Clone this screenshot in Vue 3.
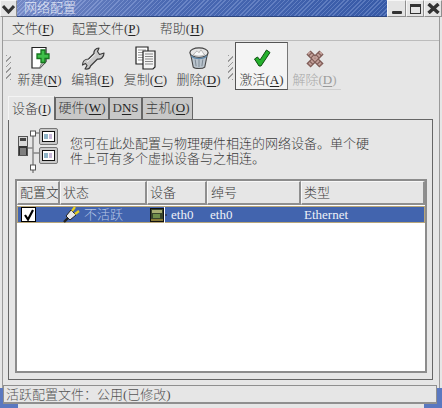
<script setup>
const menus = [
  { label: '文件', key: 'F', cls: 'm-a' },
  { label: '配置文件', key: 'P', cls: 'm-b' },
  { label: '帮助', key: 'H', cls: 'm-c' },
]
const tabs = [
  { label: '设备', key: 'I', cls: 'tab-a' },
  { label: '硬件', key: 'W', cls: 'tab-b' },
  { label: 'D', key: 'N', tail: 'S', plain: true, cls: 'tab-c' },
  { label: '主机', key: 'O', cls: 'tab-d' },
]
</script>

<template>
  <div class="win">
    <header class="title">
      <div class="tbtn menu-btn">
        <svg width="13" height="10" viewBox="0 0 13 10"><path d="M1 2 6.500 8 12 2" fill="none" stroke="#333" stroke-width="3"/></svg>
      </div>
      <div class="title-bar"><span class="title-text">网络配置</span></div>
      <div class="tbtn b-min"><span class="min-glyph"></span></div>
      <div class="tbtn b-max"><span class="max-glyph"></span></div>
      <div class="tbtn b-close">
        <svg width="13" height="11" viewBox="0 0 13 11"><path d="M1.500 1 11.500 10M11.500 1 1.500 10" stroke="#333" stroke-width="3.400"/></svg>
      </div>
    </header>

    <div class="body">
      <nav class="menubar">
        <span v-for="m in menus" :key="m.key" class="menu-item" :class="m.cls">{{ m.label }}(<u>{{ m.key }}</u>)</span>
      </nav>

      <div class="toolbar">
        <div class="grip"></div>
        <div class="tool">
          <svg class="ic" width="26" height="24" viewBox="0 0 26 24">
            <path d="M5 1.500h14v14l-6 6.500H5z" fill="#fff" stroke="#222" stroke-width="1.200"/>
            <path d="M13 22c0-3 2-6 6-6.500" fill="#bbb" stroke="#777"/>
            <path d="M14 4h4v4h4v4.500h-4v4h-4v-4h-4V8h4z" fill="#3fc04a" stroke="#17751f" stroke-width="1.300"/>
          </svg>
          <span>新建(<u>N</u>)</span>
        </div>
        <div class="tool">
          <svg class="ic" width="26" height="24" viewBox="0 0 26 24">
            <path d="M19 2 17.500 5.500 19.500 8.500 24 7C24 11 21 13.500 17.500 13L10.500 20C10 22 8 23.500 5 23L7 19.500 5.500 17.500 2.500 19C2.500 15.500 5 13 8.500 13L14 7.500C13.500 5 15.500 2 19 2Z" fill="#c9c9c9" stroke="#3c3c3c" stroke-width="1.200" stroke-linejoin="round"/>
            <path d="M7 16 15.500 8" stroke="#f2f2f2"/>
          </svg>
          <span>编辑(<u>E</u>)</span>
        </div>
        <div class="tool">
          <svg class="ic" width="26" height="24" viewBox="0 0 26 24">
            <path d="M3 1h12v17H3z" fill="#fff" stroke="#222" stroke-width="1.200"/>
            <path d="M5 4h8M5 6.500h8M5 9h8M5 11.500h8M5 14h8" stroke="#999"/>
            <path d="M10 5h12v16l-2 2H10z" fill="#f4f4f4" stroke="#222" stroke-width="1.200"/>
            <path d="M12 8h8M12 10.500h8M12 13h8M12 15.500h8M12 18h8" stroke="#888"/>
          </svg>
          <span>复制(<u>C</u>)</span>
        </div>
        <div class="tool">
          <svg class="ic" width="26" height="25" viewBox="0 0 26 25">
            <path d="M4 7 7 22c2 2 10 2 12 0L22 7z" fill="#b9c3cc" stroke="#444" stroke-width="1.100"/>
            <path d="M9 14 10 21M17 14l-1 7M13 14v8" stroke="#7b8792"/>
            <ellipse cx="13" cy="7" rx="9.500" ry="5" fill="#e6e6e6" stroke="#444" stroke-width="1.200"/>
            <path d="M7 9c3 2 9 2 12 0-2-1-2-3-4-5l-2 3-2-2z" fill="#f8f8f8" stroke="#888" stroke-width=".6"/>
            <path d="M5 10c3 4 13 4 16 0" fill="none" stroke="#5f87a8" stroke-width="1.600"/>
          </svg>
          <span>删除(<u>D</u>)</span>
        </div>
        <div class="grip grip-2"></div>
        <div class="tool tool-active">
          <svg class="ic" width="26" height="24" viewBox="0 0 26 24">
            <path d="M5.500 13 8.500 11 11 14 17.500 4 21 6.500 12 20H10z" fill="#25b02c" stroke="#0c4d10" stroke-width="1"/>
          </svg>
          <span>激活(<u>A</u>)</span>
        </div>
        <div class="tool tool-off">
          <svg class="ic" width="26" height="24" viewBox="0 0 26 24">
            <path d="M6.500 6.500 19.500 19.500M19.500 6.500 6.500 19.500" stroke="#7d5a55" stroke-width="6"/>
            <path d="M6.500 6.500 19.500 19.500M19.500 6.500 6.500 19.500" stroke="#c3a09a" stroke-width="3.400" stroke-dasharray="2 1"/>
          </svg>
          <span>解除(<u>D</u>)</span>
        </div>
      </div>

      <div class="notebook">
        <div class="tabs">
          <div v-for="(t, i) in tabs" :key="t.key" class="tab" :class="[t.cls, { active: i === 0 }]">
            <template v-if="t.plain">{{ t.label }}<u>{{ t.key }}</u>{{ t.tail }}</template>
            <template v-else>{{ t.label }}(<u>{{ t.key }}</u>)</template>
          </div>
        </div>
        <section class="panel">
          <div class="info">
            <svg class="net" width="42" height="52" viewBox="0 0 42 52">
              <path d="M16 6v34v6M16 6h7M10 21h6M16 26h7M16 40h0" stroke="#888" stroke-width="1.500" fill="none"/>
              <rect x="13.500" y="4" width="5" height="5" fill="#fff" stroke="#555"/>
              <rect x="13.500" y="38" width="5" height="5" fill="#fff" stroke="#555"/>
              <rect x="1.500" y="9.500" width="9" height="19" fill="#d8d8d8" stroke="#555"/>
              <rect x="3" y="11" width="6" height="3" fill="#444"/>
              <rect x="2" y="19" width="8" height="9" fill="#333"/>
              <path d="M4 21v7M6 21v7M8 21v7" stroke="#ccc"/>
              <g>
                <rect x="22.500" y="1.500" width="18" height="16" rx="1.500" fill="#c8c8c8" stroke="#777"/>
                <rect x="25.500" y="4.500" width="12" height="10" fill="#fff" stroke="#111"/>
                <rect x="27" y="7" width="4" height="5" fill="#8fb4c8"/>
                <rect x="32" y="7" width="3" height="5" fill="#c8b8d8"/>
              </g>
              <g>
                <rect x="22.500" y="20.500" width="18" height="16" rx="1.500" fill="#c8c8c8" stroke="#777"/>
                <rect x="25.500" y="23.500" width="12" height="10" fill="#fff" stroke="#111"/>
                <rect x="27" y="26" width="4" height="5" fill="#8fb4c8"/>
                <rect x="32" y="26" width="3" height="5" fill="#c8b8d8"/>
              </g>
            </svg>
            <p class="info-text">您可在此处配置与物理硬件相连的网络设备。单个硬<br>件上可有多个虚拟设备与之相连。</p>
          </div>

          <div class="table">
            <div class="thead">
              <div class="th c1">配置文</div>
              <div class="th c2">状态</div>
              <div class="th c3">设备</div>
              <div class="th c4">绰号</div>
              <div class="th c5">类型</div>
            </div>
            <div class="row">
              <div class="td c1"><span class="check">
                <svg width="12" height="12" viewBox="0 0 12 12"><path d="M2 6 5 10.500 10 1" fill="none" stroke="#000" stroke-width="2.200"/></svg>
              </span></div>
              <div class="td c2">
                <svg class="plug" width="17" height="17" viewBox="0 0 17 17">
                  <path d="M1 16 5 12" stroke="#222" stroke-width="2.400"/>
                  <path d="M3 10 8 4l5 5-6 5z" fill="#e8e8e8" stroke="#222"/>
                  <path d="M9 5 12 1M12 8l4-3" stroke="#e8d020" stroke-width="2.200"/>
                </svg>
                <span class="dim">不活跃</span>
              </div>
              <div class="td c3">
                <svg class="card" width="17" height="16" viewBox="0 0 17 16">
                  <rect x="0.500" y="1.500" width="13" height="13" fill="#39452c" stroke="#111"/>
                  <rect x="2" y="3" width="10" height="3" fill="#a8ae72"/>
                  <rect x="3" y="7" width="7" height="4" fill="#6f8d4a"/>
                  <path d="M1 13h12" stroke="#d8b040"/>
                  <path d="M14.500 0v16" stroke="#fff"/>
                  <path d="M15 8h2" stroke="#222"/>
                </svg>
                <span>eth0</span>
              </div>
              <div class="td c4">eth0</div>
              <div class="td c5">Ethernet</div>
            </div>
            <div class="list-empty"></div>
          </div>
        </section>
      </div>

      <footer class="status">活跃配置文件：公用(已修改)</footer>
    </div>
    <div class="desk"><span class="desk-side"></span><span class="desk-side"></span></div>
  </div>
</template>

<style>
html, body { margin: 0; background: #e6e6e6; }
</style>

<style scoped>
.win {
  width: 442px;
  height: 408px;
  overflow: hidden;
  display: flex;
  flex-direction: column;
  background: #e6e6e6;
  color: #3c3c3c;
  font: 13px/16px "Liberation Serif", "Noto Sans CJK SC", serif;
  font-weight: 300;
}
u { text-decoration-thickness: 1px; text-underline-offset: 2px; color: #222; }

.title { display: flex; height: 17px; flex: none; background: #e6e6e6; }
.tbtn {
  display: flex; align-items: center; justify-content: center;
  background: #e4e4e4; box-sizing: border-box;
  border: 1px solid; border-color: #f6f6f6 #8f8f8f #8f8f8f #f6f6f6;
  height: 17px;
}
.menu-btn { width: 17px; }
.title-bar {
  flex: 1;
  box-sizing: border-box;
  padding-left: 7px;
  border-bottom: 1px solid #2c4680;
  background:
    repeating-linear-gradient(135deg, rgba(255,255,255,.16) 0 1px, rgba(0,0,0,.05) 1px 3px),
    linear-gradient(90deg, #7a90d0 0%, #4f6fbc 40%, #3a5fb0 100%);
}
.title-text { color: #e2e7f5; font-size: 13px; line-height: 16px; display: block; }
.b-min { width: 19px; }
.b-max { width: 18px; }
.b-close { width: 18px; }
.min-glyph { width: 10px; height: 3px; margin-top: 7px; background: #333; border-radius: 1px; }
.max-glyph { width: 11px; height: 10px; border: 1px solid #333; border-top-width: 3px; box-sizing: border-box; }

.body {
  flex: none;
  height: 371px;
  margin: 0 2px;
  border-left: 1px solid #9a9a9a;
  border-right: 1px solid #9a9a9a;
  display: flex;
  flex-direction: column;
  background: #e6e6e6;
  position: relative;
}
.menubar {
  display: flex;
  height: 24px;
  padding-left: 9px;
  align-items: center;
  box-sizing: border-box;
  border-bottom: 1px solid #bcbcbc;
  flex: none;
}
.m-a { margin-right: 18px; }
.m-b { margin-right: 20px; }
.toolbar { display: flex; height: 49px; padding-top: 1px; box-sizing: border-box; flex: none; }
.grip {
  width: 5px; height: 25px; margin: 13px 2px 0 3px; flex: none;
  background: repeating-linear-gradient(135deg, #999 0 1px, transparent 1px 4px);
}
.grip-2 { margin: 13px 2px 0 3px; }
.tool {
  width: 53px; box-sizing: border-box; height: 48px; flex: none;
  display: flex; flex-direction: column; align-items: center;
  padding-top: 4px; white-space: nowrap;
}
.ic { height: 24px; margin-bottom: 2px; }
.tool-active { background: #f4f4f4; border: 1px solid #555; border-right-color: #777; padding-top: 3px; }
.tool-off { color: #a8a8a8; border-bottom: 1px solid #d0d0d0; }
.tool-off u { color: #999; }

.notebook { flex: 1; display: flex; flex-direction: column; margin: 6px 6px 0 5px; min-height: 0; }
.tabs { display: flex; height: 23px; position: relative; z-index: 1; flex: none; }
.tab {
  box-sizing: border-box; height: 22px; margin-top: 1px;
  background: #c8c8c8; border: 1px solid #666; border-bottom: 0;
  text-align: center; line-height: 20px; white-space: nowrap;
}
.tab.active { height: 24px; margin-top: 0; background: #e6e6e6; line-height: 23px; border-left-color: #f4f4f4; border-top-color: #f4f4f4; }
.tab-a { width: 47px; }
.tab-b { width: 54px; }
.tab-c { width: 33px; }
.tab-d { width: 51px; }

.panel {
  flex: none; height: 261px; box-sizing: border-box;
  border: 1px solid #666;
  padding: 0 5px 6px 6px;
  display: flex; flex-direction: column;
}
.info { display: flex; height: 59px; flex: none; padding: 7px 0 0 2px; box-sizing: border-box; }
.net { flex: none; }
.info-text { margin: 9px 0 0 11px; line-height: 15px; }

.table {
  flex: 1; min-height: 0;
  border: 2px solid #8c8c8c;
  display: flex; flex-direction: column;
  background: #fff;
}
.thead { display: flex; height: 24px; background: #e6e6e6; flex: none; }
.th {
  box-sizing: border-box; height: 24px; padding-left: 2px;
  border: 1px solid; border-width: 1px 2px 2px 1px;
  border-color: #f8f8f8 #8f8f8f #8f8f8f #f8f8f8;
  line-height: 22px; white-space: nowrap; overflow: hidden;
}
.c1 { width: 43px; flex: none; }
.c2 { width: 87px; flex: none; }
.c3 { width: 60px; flex: none; }
.c4 { width: 94px; flex: none; padding-left: 3px; }
.c5 { flex: 1; }
.row {
  display: flex; height: 17px; box-sizing: border-box; margin-top: 1px;
  background: #4264ae; border: 1px solid #b8a67a; color: #eef1f8; flex: none;
}
.td { display: flex; align-items: center; height: 15px; padding-left: 3px; box-sizing: border-box; white-space: nowrap; }
.row .c1 { width: 42px; padding-left: 3px; }
.check {
  width: 15px; height: 15px; box-sizing: border-box; background: #fff; border: 1px solid #000;
  display: flex; align-items: center; justify-content: center;
}
.plug { margin: 0 1px 0 0; flex: none; }
.dim { color: #b6c4e4; margin-left: 3px; }
.card { margin-right: 4px; margin-left: 0; flex: none; }
.list-empty { flex: 1; }

.status {
  position: absolute; left: 0; right: 2px; top: 368px;
  box-sizing: border-box; height: 19px;
  border: 1px solid #8f8f8f; border-bottom-width: 2px;
  line-height: 17px; padding-left: 2px; color: #555;
  background: #e6e6e6; white-space: nowrap;
}
.status::before, .status::after {
  content: ""; position: absolute; top: 2px; height: 16px; background: #5a78c0;
}
.status::before { left: -4px; width: 3px; }
.status::after { right: -8px; width: 7px; }
.desk { flex: 1; display: flex; justify-content: space-between; background: #e6e6e6; }
.desk-side { width: 18px; background: #5a78c0; }
</style>
